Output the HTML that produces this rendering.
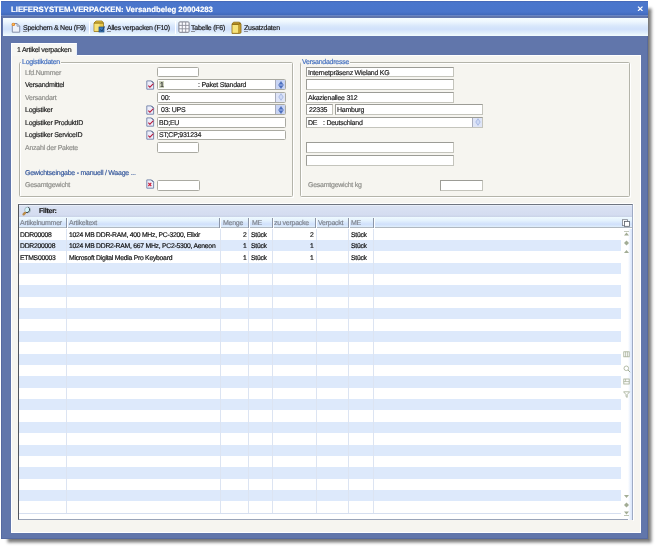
<!DOCTYPE html>
<html><head><meta charset="utf-8">
<style>
*{margin:0;padding:0;box-sizing:border-box}
html,body{width:656px;height:548px;overflow:hidden;background:#fff;position:relative}
body{font-family:"Liberation Sans",sans-serif;font-size:7px;letter-spacing:-0.25px;color:#1a1a1a}
.t,.lbl,.gd,.gh{-webkit-text-stroke:0.18px currentColor;will-change:transform;text-rendering:geometricPrecision;margin-top:0px}
.lbl{margin-top:0.5px}
.a{position:absolute}
.t{position:absolute;white-space:pre;line-height:1}
#shadow1{left:4px;top:5px;width:644px;height:534px;box-shadow:3px 3px 3px 0.5px rgba(0,0,0,.52)}
#shadow2{display:none}
#win{left:1px;top:1px;width:646.6px;height:538px;background:#6176ab;border:1px solid #566aa0}
#title{left:1px;top:1.3px;width:646.6px;height:15.2px;background:linear-gradient(180deg,#4565b2 0px,#4a76cc 1.6px,#4a75cb 11px,#4068b8 14.2px);border-bottom:1px solid #6a86c4}
#titletxt{left:10.5px;top:5.7px;font-weight:bold;font-size:7.75px;letter-spacing:0;color:#fff;margin-top:0!important}
#tb{left:2.5px;top:18px;width:645px;height:18px;background:linear-gradient(180deg,#f6fdff 0%,#eef7fe 20%,#d8e7fb 45%,#d1e1fb 62%,#e0eefb 82%,#f3fdfe 100%)}
.sep{position:absolute;top:21px;width:1px;height:13px;background:#aab6cf;border-right:1px solid #fff}
#panel{left:11px;top:55px;width:630px;height:478px;background:#f6f5f0;border:1px solid #fff}
#tab{left:11px;top:43px;width:65.5px;height:13px;background:#f7f7f3;border-top:1px solid #fff;border-left:1px solid #fff;border-right:1.5px solid #e8f0fb}
fieldset{position:absolute;border:1px solid #b4b4aa;border-radius:1.5px;box-shadow:inset 1px 1px #fff,1px 1px #fff}
.leg{position:absolute;color:#4470c0;background:#f6f5f0;padding:0 1px}
.lbl{position:absolute;white-space:pre;line-height:1;color:#222}
.dis{color:#8e8e8a}
.inp{position:absolute;background:#fff;border:1px solid #aaaaa2;border-radius:1.5px}
.cb{position:absolute;width:10.5px;background:#c9d5f4;border-left:1px solid #a8acbc}
.dcb{background:#dfe5f7}
.sq{border-radius:0;border-color:#9c9c96 #c4c4bc #c4c4bc #9c9c96}
.gh{position:absolute;white-space:pre;line-height:1;color:#7f848e;font-size:7px;margin-top:-0.25px!important}
.gd{position:absolute;white-space:pre;line-height:1;color:#111;font-size:6.8px;margin-top:1.1px!important}
.r{text-align:right}
.ico{position:absolute;width:8.5px;height:9.5px}
#grid{left:18px;top:204px;width:615px;height:316px;background:#fff;border-left:1px solid #50545c;border-top:1px solid #6f7580;border-right:1px solid #9fabc4;border-bottom:1px solid #9aa4b8}
</style></head><body>
<div id="shadow1" class="a"></div>
<div id="shadow2" class="a"></div>
<div id="win" class="a"></div>
<div id="title" class="a"></div>
<div id="titletxt" class="t">LIEFERSYSTEM-VERPACKEN: Versandbeleg 20004283</div>
<svg class="a" style="left:637px;top:5.8px" width="6.5" height="5.5" viewBox="0 0 6.5 5.5"><path d="M1 0.6 L5.5 4.9 M5.5 0.6 L1 4.9" stroke="#fff" stroke-width="1.3"/></svg>
<div id="tb" class="a"></div>
<div class="sep" style="left:89px"></div>
<div class="sep" style="left:174.5px"></div>
<div class="t" style="left:23px;top:24.5px">Speichern &amp; Neu (F9)</div>
<div class="t" style="left:106.5px;top:24.5px">Alles verpacken (F10)</div>
<div class="t" style="left:191px;top:24.5px">Tabelle (F6)</div>
<div class="t" style="left:244px;top:24.5px">Zusatzdaten</div>
<div class="a" style="left:23px;top:30.6px;width:4px;height:0.8px;background:#8a8e98"></div><div class="a" style="left:106.8px;top:30.6px;width:4.2px;height:0.8px;background:#8a8e98"></div><div class="a" style="left:191px;top:30.6px;width:4px;height:0.8px;background:#8a8e98"></div><div class="a" style="left:244.2px;top:30.6px;width:4px;height:0.8px;background:#8a8e98"></div>

<div id="panel" class="a"></div>
<div id="tab" class="a"></div>
<div class="t" style="left:16.6px;top:47px">1 Artikel verpacken</div>

<fieldset style="left:19px;top:62px;width:274px;height:134.5px"></fieldset>
<div class="leg t" style="left:21px;top:59px">Logistikdaten</div>
<fieldset style="left:299.5px;top:62px;width:330px;height:134.5px"></fieldset>
<div class="leg t" style="left:301px;top:59px">Versandadresse</div>


<!-- left form -->
<div class="lbl dis" style="left:24.7px;top:69px">Lfd.Nummer</div>
<div class="lbl" style="left:25px;top:81.5px">Versandmittel</div>
<div class="lbl dis" style="left:25px;top:94px">Versandart</div>
<div class="lbl" style="left:25px;top:106.5px">Logistiker</div>
<div class="lbl" style="left:25px;top:119px">Logistiker ProduktID</div>
<div class="lbl" style="left:25px;top:131.5px">Logistiker ServiceID</div>
<div class="lbl dis" style="left:25px;top:144px">Anzahl der Pakete</div>
<div class="lbl" style="left:25px;top:169.5px;color:#36589c">Gewichtseingabe - manuell / Waage ...</div>
<div class="lbl dis" style="left:25px;top:181.5px">Gesamtgewicht</div>

<div class="inp" style="left:157.4px;top:66.7px;width:42.1px;height:10.5px"></div>
<div class="inp" style="left:157.4px;top:79.3px;width:128.7px;height:10.3px"><div class="cb" style="right:0;top:0;bottom:0"></div></div>
<div class="inp" style="left:157.4px;top:92px;width:128.7px;height:10.5px"><div class="cb dcb" style="right:0;top:0;bottom:0"></div></div>
<div class="inp" style="left:157.4px;top:104.3px;width:128.7px;height:10.5px"><div class="cb" style="right:0;top:0;bottom:0"></div></div>
<div class="inp" style="left:157.4px;top:117px;width:128.7px;height:10.5px"></div>
<div class="inp" style="left:157.4px;top:129.5px;width:128.7px;height:10.5px"></div>
<div class="inp" style="left:157.4px;top:142.1px;width:42.1px;height:10.5px"></div>
<div class="inp" style="left:157px;top:180px;width:42.5px;height:10.5px"></div>

<div class="a" style="left:159.3px;top:80.6px;width:4.8px;height:7.6px;background:#cfd5bf"></div>
<div class="lbl" style="left:160px;top:81.5px">1</div>
<div class="lbl" style="left:198.2px;top:81.5px">: Paket Standard</div>
<div class="lbl" style="left:161px;top:94px">00:</div>
<div class="lbl" style="left:160.7px;top:106.5px">03: UPS</div>
<div class="lbl" style="left:159px;top:119px">BD;EU</div>
<div class="lbl" style="left:159px;top:131.5px">ST;CP;931234</div>

<!-- right form -->
<div class="inp sq" style="left:306px;top:66.7px;width:148px;height:10.5px"></div>
<div class="inp sq" style="left:306px;top:79.2px;width:148px;height:10.6px"></div>
<div class="inp sq" style="left:306px;top:91.8px;width:148px;height:10.8px"></div>
<div class="inp sq" style="left:306px;top:104.3px;width:27.2px;height:10.5px"></div>
<div class="inp sq" style="left:335px;top:104.3px;width:148px;height:10.5px"></div>
<div class="inp sq" style="left:306px;top:117.1px;width:177px;height:10.5px"><div class="cb dcb" style="right:0;top:0;bottom:0"></div></div>
<div class="inp sq" style="left:306px;top:142.1px;width:147.6px;height:10.5px"></div>
<div class="inp sq" style="left:306px;top:155px;width:147.6px;height:10.6px"></div>
<div class="inp sq" style="left:440.2px;top:180.2px;width:42.4px;height:10.7px"></div>

<div class="lbl" style="left:308px;top:69px">Internetpräsenz Wieland KG</div>
<div class="lbl" style="left:308px;top:94px">Akazienallee 312</div>
<div class="lbl" style="left:308.5px;top:106.5px">22335</div>
<div class="lbl" style="left:336.6px;top:106.5px">Hamburg</div>
<div class="lbl" style="left:308.3px;top:119px">DE</div>
<div class="lbl" style="left:323.2px;top:119px">: Deutschland</div>
<div class="lbl dis" style="left:308px;top:181.5px">Gesamtgewicht kg</div>

<div id="grid" class="a"></div>
<div class="a" style="left:18px;top:202.6px;width:615px;height:1.4px;background:#fff"></div><div class="a" style="left:19px;top:205px;width:613px;height:11.7px;background:linear-gradient(180deg,#dae2f3,#d4dcf0 80%,#c9d2e6);border-top:1px solid #e8eef8"></div>
<div class="a" style="left:19px;top:216.7px;width:613px;height:11.8px;background:linear-gradient(180deg,#effaff 0%,#e4f2fd 35%,#d0e0fb 72%,#dfeefb 100%);border-bottom:1px solid #b0b8c0"></div>
<div class="a" style="left:65.6px;top:218px;width:1px;height:9.5px;background:#8c96a8"></div>
<div class="a" style="left:66.6px;top:218px;width:1px;height:9.5px;background:#fbfdff"></div>
<div class="a" style="left:218.9px;top:218px;width:1px;height:9.5px;background:#8c96a8"></div>
<div class="a" style="left:219.9px;top:218px;width:1px;height:9.5px;background:#fbfdff"></div>
<div class="a" style="left:247.8px;top:218px;width:1px;height:9.5px;background:#8c96a8"></div>
<div class="a" style="left:248.8px;top:218px;width:1px;height:9.5px;background:#fbfdff"></div>
<div class="a" style="left:271.6px;top:218px;width:1px;height:9.5px;background:#8c96a8"></div>
<div class="a" style="left:272.6px;top:218px;width:1px;height:9.5px;background:#fbfdff"></div>
<div class="a" style="left:315.3px;top:218px;width:1px;height:9.5px;background:#8c96a8"></div>
<div class="a" style="left:316.3px;top:218px;width:1px;height:9.5px;background:#fbfdff"></div>
<div class="a" style="left:347.8px;top:218px;width:1px;height:9.5px;background:#8c96a8"></div>
<div class="a" style="left:348.8px;top:218px;width:1px;height:9.5px;background:#fbfdff"></div>
<div class="a" style="left:372.5px;top:218px;width:1px;height:9.5px;background:#8c96a8"></div>
<div class="a" style="left:373.5px;top:218px;width:1px;height:9.5px;background:#fbfdff"></div>
<div class="a" style="left:19px;top:239.87px;width:602.2px;height:11.37px;background:#dde9fb"></div>
<div class="a" style="left:19px;top:262.61px;width:602.2px;height:11.37px;background:#dde9fb"></div>
<div class="a" style="left:19px;top:285.35px;width:602.2px;height:11.37px;background:#dde9fb"></div>
<div class="a" style="left:19px;top:308.09px;width:602.2px;height:11.37px;background:#dde9fb"></div>
<div class="a" style="left:19px;top:330.83px;width:602.2px;height:11.37px;background:#dde9fb"></div>
<div class="a" style="left:19px;top:353.57px;width:602.2px;height:11.37px;background:#dde9fb"></div>
<div class="a" style="left:19px;top:376.31px;width:602.2px;height:11.37px;background:#dde9fb"></div>
<div class="a" style="left:19px;top:399.05px;width:602.2px;height:11.37px;background:#dde9fb"></div>
<div class="a" style="left:19px;top:421.79px;width:602.2px;height:11.37px;background:#dde9fb"></div>
<div class="a" style="left:19px;top:444.53px;width:602.2px;height:11.37px;background:#dde9fb"></div>
<div class="a" style="left:19px;top:467.27px;width:602.2px;height:11.37px;background:#dde9fb"></div>
<div class="a" style="left:19px;top:490.01px;width:602.2px;height:11.37px;background:#dde9fb"></div>
<div class="a" style="left:19px;top:512.75px;width:602px;height:1px;background:#d6dff0"></div>
<div class="a" style="left:66.2px;top:228.5px;width:1px;height:284.2px;background:#dce4f2"></div>
<div class="a" style="left:219.5px;top:228.5px;width:1px;height:284.2px;background:#dce4f2"></div>
<div class="a" style="left:248.4px;top:228.5px;width:1px;height:284.2px;background:#dce4f2"></div>
<div class="a" style="left:272.2px;top:228.5px;width:1px;height:284.2px;background:#dce4f2"></div>
<div class="a" style="left:315.9px;top:228.5px;width:1px;height:284.2px;background:#dce4f2"></div>
<div class="a" style="left:348.4px;top:228.5px;width:1px;height:284.2px;background:#dce4f2"></div>
<div class="a" style="left:373.1px;top:228.5px;width:1px;height:284.2px;background:#dce4f2"></div>
<div class="a" style="left:627.5px;top:228.5px;width:4px;height:291px;background:linear-gradient(90deg,#fff,#d6e4fb)"></div><div class="a" style="left:633px;top:204px;width:1px;height:317px;background:#fff"></div>
<div class="gh" style="left:20px;top:219.8px">Artikelnummer</div>
<div class="gh" style="left:69px;top:219.8px">Artikeltext</div>
<div class="gh" style="left:222.8px;top:219.8px">Menge</div>
<div class="gh" style="left:251.5px;top:219.8px">ME</div>
<div class="gh" style="left:274.4px;top:219.8px">zu verpacke</div>
<div class="gh" style="left:318.3px;top:219.8px">Verpackt</div>
<div class="gh" style="left:351.2px;top:219.8px">ME</div>
<div class="t" style="left:39.2px;top:207.6px;font-weight:bold">Filter:</div>
<div class="gd" style="left:20px;top:231.70px">DDR00008</div>
<div class="gd" style="left:69.4px;top:231.70px">1024 MB DDR-RAM, 400 MHz, PC-3200, Elixir</div>
<div class="gd r" style="right:409.7px;top:231.70px">2</div>
<div class="gd" style="left:250.9px;top:231.70px">Stück</div>
<div class="gd r" style="right:342.7px;top:231.70px">2</div>
<div class="gd" style="left:350.6px;top:231.70px">Stück</div>
<div class="gd" style="left:20px;top:243.07px">DDR200008</div>
<div class="gd" style="left:69.4px;top:243.07px">1024 MB DDR2-RAM, 667 MHz, PC2-5300, Aeneon</div>
<div class="gd r" style="right:409.7px;top:243.07px">1</div>
<div class="gd" style="left:250.9px;top:243.07px">Stück</div>
<div class="gd r" style="right:342.7px;top:243.07px">1</div>
<div class="gd" style="left:350.6px;top:243.07px">Stück</div>
<div class="gd" style="left:20px;top:254.44px">ETMS00003</div>
<div class="gd" style="left:68.6px;top:254.44px">Microsoft Digital Media Pro Keyboard</div>
<div class="gd r" style="right:409.7px;top:254.44px">1</div>
<div class="gd" style="left:250.9px;top:254.44px">Stück</div>
<div class="gd r" style="right:342.7px;top:254.44px">1</div>
<div class="gd" style="left:350.6px;top:254.44px">Stück</div>
<svg class="a" style="left:11px;top:22px" width="10" height="11" viewBox="0 0 10 11"><path d="M1.3 1.5 H6 L8.7 4.2 V10.2 H1.3 Z" fill="#eef2fa" stroke="#7a86a0" stroke-width="0.9"/><path d="M6 1.5 V4.2 H8.7" fill="none" stroke="#7a86a0" stroke-width="0.7"/><circle cx="2.4" cy="2.4" r="1.7" fill="#e58a2a"/><circle cx="2.2" cy="2.2" r="0.7" fill="#ffd27a"/></svg>
<svg class="a" style="left:93px;top:20px" width="12" height="13" viewBox="0 0 12 13"><path d="M1 3 L3 1 H9 L10.5 3 V11.5 H1 Z" fill="#e8c84a" stroke="#9a7a18" stroke-width="0.8"/><rect x="1.5" y="3.5" width="5" height="7.5" fill="#f6e27a"/><path d="M1 3 H10.5" stroke="#8a6a10" stroke-width="1"/><rect x="6" y="7" width="5" height="5" fill="#3a78b8" stroke="#1f4a78" stroke-width="0.7"/><path d="M7 9.5 L9 11 L11.5 6.5" fill="none" stroke="#1b3b66" stroke-width="0.9"/></svg>
<svg class="a" style="left:177.5px;top:21.2px" width="12" height="12" viewBox="0 0 12 12"><rect x="0.9" y="0.9" width="10.2" height="10.4" rx="1" fill="#fbfbff" stroke="#7d7f8a" stroke-width="1"/><path d="M4.3 1 V11.2 M7.7 1 V11.2 M1 4.4 H11 M1 7.8 H11" stroke="#8c8e9a" stroke-width="0.9"/></svg>
<svg class="a" style="left:230.5px;top:20.5px" width="11" height="13" viewBox="0 0 11 13"><path d="M1 3 L2.5 1.2 H8.5 L10 3 V11.8 L8.6 12.4 H1 Z" fill="#c9a030" stroke="#8c6a12" stroke-width="0.8"/><rect x="1.5" y="3.8" width="6" height="8" fill="#f6e47c"/><path d="M1.2 3.2 H7.8 L9.6 2.2" fill="none" stroke="#7a5a0a" stroke-width="1"/><path d="M7.6 3.6 V12" stroke="#a88420" stroke-width="0.6"/></svg>
<svg class="a" style="left:146px;top:79.6px" width="9" height="10" viewBox="0 0 9 10"><path d="M0.8 0.9 H5.4 L7.6 3.1 V9.2 H0.8 Z" fill="#eceefa" stroke="#6f80a8" stroke-width="0.9"/><path d="M5.4 0.9 L7.6 3.1" fill="none" stroke="#4f6088" stroke-width="1"/><path d="M2.3 5.6 L3.9 7.2 L7.4 3.6" fill="none" stroke="#b81c3c" stroke-width="1.1"/></svg>
<svg class="a" style="left:146px;top:104.8px" width="9" height="10" viewBox="0 0 9 10"><path d="M0.8 0.9 H5.4 L7.6 3.1 V9.2 H0.8 Z" fill="#eceefa" stroke="#6f80a8" stroke-width="0.9"/><path d="M5.4 0.9 L7.6 3.1" fill="none" stroke="#4f6088" stroke-width="1"/><path d="M2.3 5.6 L3.9 7.2 L7.4 3.6" fill="none" stroke="#b81c3c" stroke-width="1.1"/></svg>
<svg class="a" style="left:146px;top:117.3px" width="9" height="10" viewBox="0 0 9 10"><path d="M0.8 0.9 H5.4 L7.6 3.1 V9.2 H0.8 Z" fill="#eceefa" stroke="#6f80a8" stroke-width="0.9"/><path d="M5.4 0.9 L7.6 3.1" fill="none" stroke="#4f6088" stroke-width="1"/><path d="M2.3 5.6 L3.9 7.2 L7.4 3.6" fill="none" stroke="#b81c3c" stroke-width="1.1"/></svg>
<svg class="a" style="left:146px;top:129.9px" width="9" height="10" viewBox="0 0 9 10"><path d="M0.8 0.9 H5.4 L7.6 3.1 V9.2 H0.8 Z" fill="#eceefa" stroke="#6f80a8" stroke-width="0.9"/><path d="M5.4 0.9 L7.6 3.1" fill="none" stroke="#4f6088" stroke-width="1"/><path d="M2.3 5.6 L3.9 7.2 L7.4 3.6" fill="none" stroke="#b81c3c" stroke-width="1.1"/></svg>
<svg class="a" style="left:146px;top:178.6px" width="9" height="10" viewBox="0 0 9 10"><path d="M0.8 0.9 H5.4 L7.6 3.1 V9.2 H0.8 Z" fill="#eceefa" stroke="#6f80a8" stroke-width="0.9"/><path d="M5.4 0.9 L7.6 3.1" fill="none" stroke="#4f6088" stroke-width="1"/><path d="M2.3 3.8 L5.3 7 M5.3 3.8 L2.3 7" stroke="#cc2038" stroke-width="1.1"/></svg>
<svg class="a" style="left:277.8px;top:80.6px" width="6" height="8" viewBox="0 0 6 8"><path d="M3 0.5 L5.4 4 L3 7.5 L0.6 4 Z" fill="#4a6fc4" stroke="#3a5aa8" stroke-width="0.5"/><path d="M1.2 4 H4.8" stroke="#dfe8ff" stroke-width="0.7"/></svg>
<svg class="a" style="left:277.8px;top:93.3px" width="6" height="8" viewBox="0 0 6 8"><path d="M3 0.7 L5.2 4 L3 7.3 L0.8 4 Z" fill="#cfdaf6" stroke="#9fb2e0" stroke-width="0.8"/></svg>
<svg class="a" style="left:277.8px;top:105.6px" width="6" height="8" viewBox="0 0 6 8"><path d="M3 0.5 L5.4 4 L3 7.5 L0.6 4 Z" fill="#4a6fc4" stroke="#3a5aa8" stroke-width="0.5"/><path d="M1.2 4 H4.8" stroke="#dfe8ff" stroke-width="0.7"/></svg>
<svg class="a" style="left:474.9px;top:118.4px" width="6" height="8" viewBox="0 0 6 8"><path d="M3 0.7 L5.2 4 L3 7.3 L0.8 4 Z" fill="#cfdaf6" stroke="#9fb2e0" stroke-width="0.8"/></svg>
<svg class="a" style="left:21px;top:206px" width="11" height="10" viewBox="0 0 11 10"><circle cx="6.6" cy="4" r="2.9" fill="#d6f6fc" stroke="#8a96a0" stroke-width="0.6"/><path d="M7.2 1.2 A2.9 2.9 0 0 1 5 6.5" fill="none" stroke="#3a444c" stroke-width="1"/><path d="M4 6.9 L2.6 8.3" stroke="#b98a48" stroke-width="2.4" stroke-linecap="round"/></svg>
<svg class="a" style="left:622px;top:219px" width="8" height="8" viewBox="0 0 8 8"><rect x="0.5" y="0.7" width="5" height="6" fill="#fff" stroke="#7a7f88" stroke-width="0.8"/><rect x="2.5" y="2.5" width="5" height="4.8" fill="#fff" stroke="#5a5f68" stroke-width="0.8"/></svg>
<svg class="a" style="left:623.1px;top:231px" width="7" height="5" viewBox="0 0 7 5"><path d="M1 0.3 H6" stroke="#a2ac94" stroke-width="0.8"/><path d="M1 4.6 L3.5 1.6 L6 4.6 Z" fill="#a2ac94"/></svg>
<svg class="a" style="left:623.1px;top:239.8px" width="7" height="6" viewBox="0 0 7 6"><path d="M3.5 0.5 L6 3 L3.5 5.5 L1 3 Z" fill="#a2ac94"/></svg>
<svg class="a" style="left:623.1px;top:248.6px" width="7" height="5" viewBox="0 0 7 5"><path d="M1 4 L3.5 1 L6 4 Z" fill="#a2ac94"/></svg>
<svg class="a" style="left:623.1px;top:494px" width="7" height="5" viewBox="0 0 7 5"><path d="M1 1 L3.5 4 L6 1 Z" fill="#a2ac94"/></svg>
<svg class="a" style="left:623.1px;top:502.2px" width="7" height="6" viewBox="0 0 7 6"><path d="M3.5 0.5 L6 3 L3.5 5.5 L1 3 Z" fill="#a2ac94"/></svg>
<svg class="a" style="left:623.1px;top:510.8px" width="7" height="5" viewBox="0 0 7 5"><path d="M1 0.4 L3.5 3.4 L6 0.4 Z" fill="#a2ac94"/><path d="M1 4.6 H6" stroke="#a2ac94" stroke-width="0.8"/></svg>
<svg class="a" style="left:623px;top:351px" width="7" height="7" viewBox="0 0 7 7"><rect x="0.8" y="0.8" width="5.4" height="5" fill="none" stroke="#a2ac94" stroke-width="0.8"/><path d="M2.6 0.8 V5.8 M4.4 0.8 V5.8" stroke="#a2ac94" stroke-width="0.7"/></svg>
<svg class="a" style="left:623px;top:364.5px" width="8" height="8" viewBox="0 0 8 8"><circle cx="3.3" cy="3.3" r="2.3" fill="none" stroke="#a2ac94" stroke-width="0.8"/><path d="M5 5 L7.2 7.2" stroke="#a2ac94" stroke-width="1"/></svg>
<svg class="a" style="left:623px;top:378.2px" width="7" height="7" viewBox="0 0 7 7"><rect x="0.8" y="1" width="5.4" height="5" fill="none" stroke="#a2ac94" stroke-width="0.8"/><path d="M0.8 3.6 H6.2 M2.6 1 V3.6" stroke="#a2ac94" stroke-width="0.7"/></svg>
<svg class="a" style="left:623px;top:390.8px" width="8" height="7" viewBox="0 0 8 7"><path d="M0.6 0.8 H6.6 L4.2 3.6 V6.4 L3 5.6 V3.6 Z" fill="none" stroke="#a2ac94" stroke-width="0.8"/></svg>
</body></html>
